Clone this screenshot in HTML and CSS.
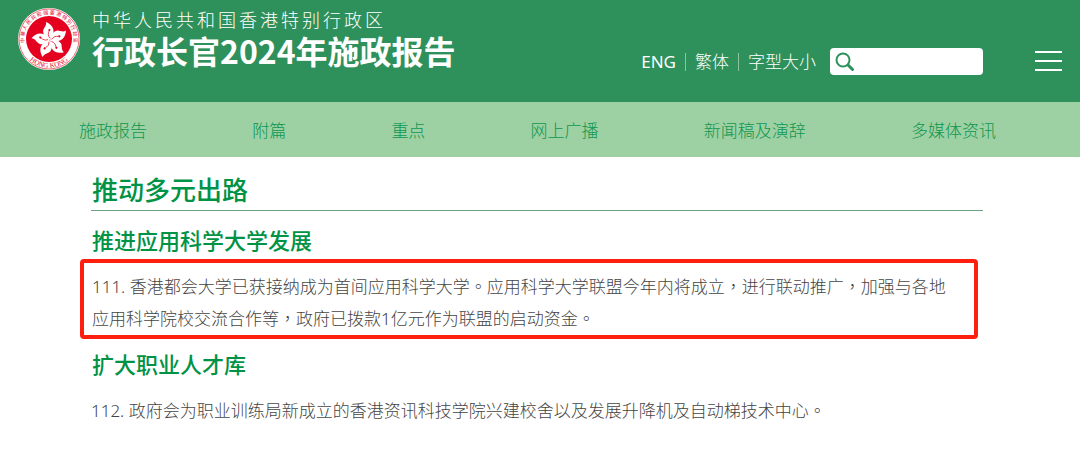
FILE: index.html
```html
<!DOCTYPE html>
<html lang="zh-Hans">
<head>
    <meta charset="UTF-8">
    <meta name="viewport" content="width=device-width, initial-scale=1.0">
    <title>行政长官2024年施政报告</title>

    <link rel="stylesheet" href="styles.css">
</head>

<body>
  <header class="header">
    <a class="brand" href="#">
      <svg class="emblem" viewBox="0 0 62 62" role="img" aria-label="HONG KONG">
        <defs>
          <path id="ringTop" d="M 11.8 46.5 A 24.7 24.7 0 1 1 50.2 46.5"/>
          <path id="ringBottom" d="M 9 49.5 A 28.8 28.8 0 0 0 53 49.5"/>
          <g id="petal">
            <path fill="#fff" d="M 0 0 C -3 -2 -6.5 -6 -5.5 -10 C -4.8 -13 -1 -14.5 -1.5 -18.5 C 3 -16 6 -11.5 4.5 -7 C 3.5 -4 0.5 -3 0 0 Z"/>
            <path fill="none" stroke="#e6001f" stroke-width="0.7" d="M 0 -2 C -1.5 -5 -1 -7 0.5 -9"/>
            <circle cx="0.8" cy="-10" r="1.1" fill="#e6001f"/>
          </g>
        </defs>
        <circle cx="31" cy="31" r="31" fill="#fff"/>
        <circle cx="31" cy="31" r="30" fill="none" stroke="#e6001f" stroke-width="0.6"/>
        <circle cx="31" cy="31" r="23" fill="#e6001f"/>
        <g transform="translate(32 32)">
          <use href="#petal" transform="rotate(-8)"/>
          <use href="#petal" transform="rotate(64)"/>
          <use href="#petal" transform="rotate(136)"/>
          <use href="#petal" transform="rotate(208)"/>
          <use href="#petal" transform="rotate(280)"/>
        </g>
        <text class="ring-zh"><textPath href="#ringTop" startOffset="50%">中 華 人 民 共 和 國 香 港 特 別 行 政 區</textPath></text>
        <text class="ring-en"><textPath href="#ringBottom" startOffset="50%">HONG KONG</textPath></text>
      </svg>
      <span class="titles">
        <span class="region">中华人民共和国香港特别行政区</span>
        <span class="report">行政长官2024年施政报告</span>
      </span>
    </a>

    <div class="tools">
      <div class="links">
        <a class="eng" href="#">ENG</a>
        <a href="#">繁体</a>
        <a href="#">字型大小</a>
      </div>
      <form class="search">
        <svg viewBox="0 0 20 20" aria-hidden="true">
          <circle cx="8" cy="8" r="6.5"/>
          <path d="M 13 13 L 17.5 17.5"/>
        </svg>
        <input type="text" aria-label="搜寻">
      </form>
      <button class="menu" type="button" aria-label="目录">
        <span></span>
        <span></span>
        <span></span>
      </button>
    </div>
  </header>

  <nav class="nav">
    <a href="#">施政报告</a>
    <a href="#">附篇</a>
    <a href="#">重点</a>
    <a href="#">网上广播</a>
    <a href="#">新闻稿及演辞</a>
    <a href="#">多媒体资讯</a>
  </nav>

  <main class="content">
    <h1>推动多元出路</h1>

    <h2>推进应用科学大学发展</h2>
    <p class="highlight" lang="zh-Hant">111. 香港都会大学已获接纳成为首间应用科学大学。应用科学大学联盟今年内将成立，进行联动推广，加强与各地应用科学院校交流合作等，政府已拨款1亿元作为联盟的启动资金。</p>

    <h2>扩大职业人才库</h2>
    <p lang="zh-Hant">112. 政府会为职业训练局新成立的香港资讯科技学院兴建校舍以及发展升降机及自动梯技术中心。</p>
  </main>
</body>
</html>
```

FILE: styles.css
```css
* {
  box-sizing: border-box;
}

body {
  margin: 0;
  font-family: "Noto Sans", "Noto Sans CJK TC", sans-serif;
  font-size: 17px;
  font-weight: 300;
  color: #444;
  background-color: #fff;
}

a {
  color: inherit;
  text-decoration: none;
}

.header {
  display: flex;
  justify-content: space-between;
  align-items: flex-start;
  height: 102px;
  padding: 8px 18px;
  color: #fff;
  background-color: #2e915b;
}

.brand {
  display: flex;
  gap: 12px;
}

.emblem {
  width: 62px;
  height: 62px;
}

.ring-zh,
.ring-en {
  fill: #e6001f;
  text-anchor: middle;
}

.ring-zh {
  font: 5px "Noto Sans CJK TC", sans-serif;
}

.ring-en {
  font: 7px "Liberation Serif", serif;
}

.titles {
  display: flex;
  flex-direction: column;
  font-family: "Noto Sans CJK SC", sans-serif;
}

.region {
  font-size: 18px;
  line-height: 22px;
  letter-spacing: 3px;
}

.report {
  font-size: 32px;
  font-weight: bold;
  line-height: 40px;
}

.tools {
  display: flex;
  align-items: center;
  padding-top: 40px;
}

.links {
  display: flex;
  align-items: center;
  font-family: "Noto Sans", "Noto Sans CJK SC", sans-serif;
}

.links a {
  line-height: 18px;
}

.links a + a {
  margin-left: 9px;
  padding-left: 9px;
  border-left: 1px solid #8cc4a3;
}

.links .eng {
  font-weight: 400;
}

.search {
  display: flex;
  align-items: center;
  width: 153px;
  height: 27px;
  margin-left: 14px;
  padding-left: 5px;
  border-radius: 4px;
  background-color: #fff;
}

.search svg {
  flex: none;
  width: 20px;
  height: 20px;
  fill: none;
  stroke: #2e915b;
  stroke-width: 2;
}

.search path {
  stroke-width: 3;
  stroke-linecap: round;
}

.search input {
  width: 100%;
  border: 0;
  outline: 0;
  background: none;
}

.menu {
  display: flex;
  flex-direction: column;
  gap: 7px;
  width: 27px;
  margin-left: 52px;
  padding: 0 0 2px;
  border: 0;
  background: none;
}

.menu span {
  height: 2px;
  background-color: #fff;
}

.nav {
  display: flex;
  justify-content: space-between;
  align-items: center;
  height: 55px;
  padding: 0 84px 0 79px;
  font-family: "Noto Sans CJK SC", sans-serif;
  color: #0e964f;
  background-color: #9dd1a4;
}

.content {
  padding: 12px 97px 24px 91px;
}

h1,
h2 {
  margin: 0;
  padding-left: 1px;
  font-family: "Noto Sans CJK SC", sans-serif;
  font-weight: 500;
  color: #009245;
}

h1 {
  padding-bottom: 2px;
  border-bottom: 1px solid #6fa585;
  font-size: 26px;
  line-height: 39px;
}

h2 {
  margin-top: 12px;
  font-size: 22px;
  line-height: 32px;
}

p {
  margin: 16px 0 0;
  line-height: 32px;
}

.highlight {
  margin: 4px 5px 0 -11px;
  padding: 8px 16px 0 8px;
  border: 4px solid #ff1f0f;
  border-radius: 4px;
}

.highlight + h2 {
  margin-top: 8px;
}
```
